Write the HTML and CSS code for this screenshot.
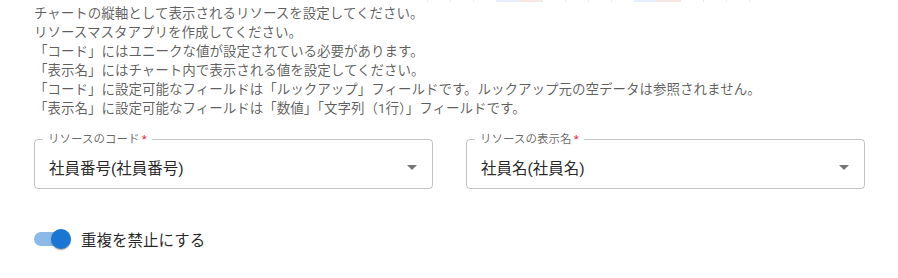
FILE: index.html
```html
<!DOCTYPE html>
<html lang="ja">
<head>
    <meta charset="UTF-8">
    <meta name="viewport" content="width=device-width, initial-scale=1.0">
    <title>リソース設定</title>
    <link rel="stylesheet" href="styles.css">
</head>
<body>
    <!-- bottom edge of the chart preview above -->
    <div class="chart-edge">
        <span class="tick"></span><span class="tick"></span><span class="tick"></span>
        <span class="cell blue"></span><span class="cell red"></span>
        <span class="tick"></span><span class="tick"></span><span class="tick"></span><span class="tick"></span>
        <span class="cell blue"></span><span class="cell red"></span>
        <span class="tick"></span><span class="tick"></span><span class="tick"></span><span class="tick"></span>
    </div>

    <main class="container">
        <div class="help">
            <p>チャートの縦軸として表示されるリソースを設定してください。</p>
            <p>リソースマスタアプリを作成してください。</p>
            <p>「コード」にはユニークな値が設定されている必要があります。</p>
            <p>「表示名」にはチャート内で表示される値を設定してください。</p>
            <p>「コード」に設定可能なフィールドは「ルックアップ」フィールドです。ルックアップ元の空データは参照されません。</p>
            <p>「表示名」に設定可能なフィールドは「数値」「文字列（1行）」フィールドです。</p>
        </div>

        <div class="fields">
            <fieldset class="outlined">
                <legend>リソースのコード<span class="req">&thinsp;*</span></legend>
                <div class="select-value">
                    <span>社員番号(社員番号)</span>
                    <svg class="arrow" viewBox="0 0 24 24" width="24" height="24"><path d="M7 10l5 5 5-5z"/></svg>
                </div>
            </fieldset>

            <fieldset class="outlined">
                <legend>リソースの表示名<span class="req">&thinsp;*</span></legend>
                <div class="select-value">
                    <span>社員名(社員名)</span>
                    <svg class="arrow" viewBox="0 0 24 24" width="24" height="24"><path d="M7 10l5 5 5-5z"/></svg>
                </div>
            </fieldset>
        </div>

        <label class="switch-row">
            <span class="switch">
                <span class="track"></span>
                <span class="thumb"></span>
            </span>
            <span class="switch-text">重複を禁止にする</span>
        </label>
    </main>
</body>
</html>
```

FILE: styles.css
```css
body {
    font-family: Roboto, "Noto Sans CJK JP", sans-serif;
    margin: 0;
    padding: 0;
    background-color: #fff;
    color: rgba(0, 0, 0, 0.87);
}
.chart-edge {
    display: flex;
    height: 2px;
    padding-left: 427px;
}
.chart-edge .tick {
    width: 23px;
    border-left: 1px solid #ececec;
    box-sizing: border-box;
}
.chart-edge .cell {
    width: 23px;
}
.chart-edge .blue {
    background-color: #e6eefb;
}
.chart-edge .red {
    background-color: #fbe6e6;
}
.container {
    padding: 0 33px 0 34px;
}
.help {
    margin-top: 2px;
    font-size: 13.5px;
    line-height: 19px;
    color: rgba(0, 0, 0, 0.64);
    text-spacing-trim: space-first;
}
.help p {
    margin: 0;
    white-space: nowrap;
}
.fields {
    display: grid;
    grid-template-columns: 1fr 1fr;
    column-gap: 33px;
    margin-top: 15px;
}
.outlined {
    margin: 0;
    padding: 0 8px;
    border: 1px solid rgba(0, 0, 0, 0.23);
    border-radius: 4px;
    min-width: 0;
}
.outlined legend {
    padding: 0 5px;
    font-size: 11.5px;
    line-height: 12px;
    color: rgba(0, 0, 0, 0.6);
}
.req {
    color: #d32f2f;
}
.select-value {
    display: flex;
    align-items: center;
    justify-content: space-between;
    height: 43px;
    padding-left: 6px;
    font-size: 15.5px;
}
.arrow {
    fill: rgba(0, 0, 0, 0.54);
}
.switch-row {
    display: inline-flex;
    align-items: center;
    margin-top: 31px;
    margin-left: -12px;
    cursor: pointer;
}
.switch {
    position: relative;
    display: inline-block;
    width: 58px;
    height: 38px;
    padding: 12px;
    box-sizing: border-box;
}
.track {
    display: block;
    height: 100%;
    border-radius: 7px;
    background-color: #1976d2;
    opacity: 0.5;
}
.thumb {
    position: absolute;
    top: 9px;
    left: 29px;
    width: 20px;
    height: 20px;
    border-radius: 50%;
    background-color: #1976d2;
    box-shadow: 0 2px 1px -1px rgba(0, 0, 0, 0.2), 0 1px 1px 0 rgba(0, 0, 0, 0.14), 0 1px 3px 0 rgba(0, 0, 0, 0.12);
}
.switch-text {
    margin-left: 1px;
    font-size: 15.5px;
    color: rgba(0, 0, 0, 0.87);
}
```
